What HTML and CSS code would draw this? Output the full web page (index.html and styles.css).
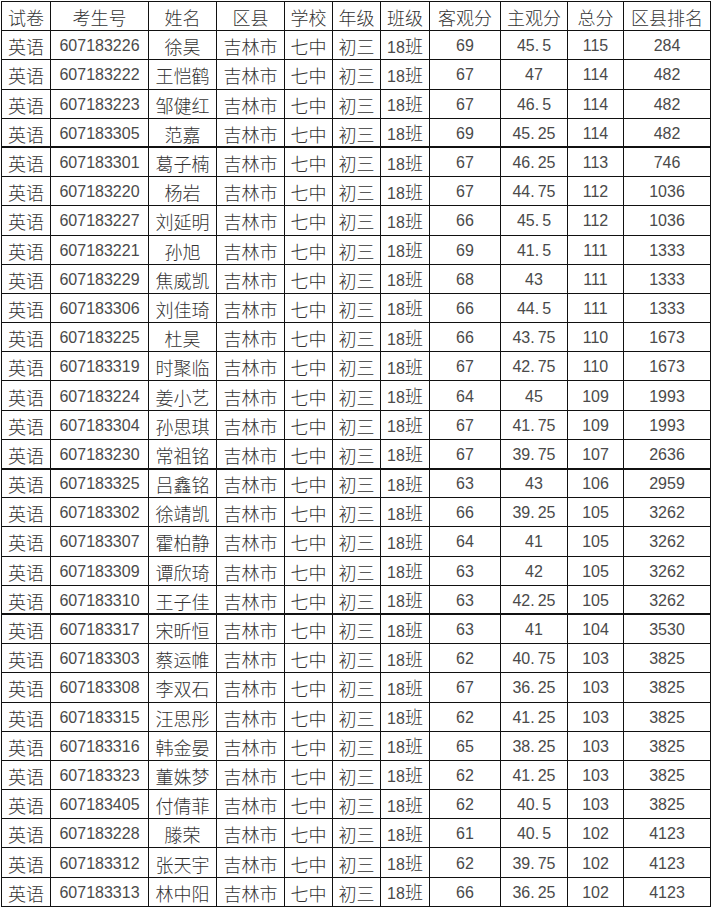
FILE: index.html
```html
<!DOCTYPE html>
<html lang="zh-CN">
<head>
<meta charset="utf-8">
<title>成绩表</title>
<link rel="stylesheet" href="styles.css">
</head>
<body>
<table class="grid">
<colgroup>
<col class="c1"><col class="c2"><col class="c3"><col class="c4"><col class="c5"><col class="c6"><col class="c7"><col class="c8"><col class="c9"><col class="c10"><col class="c11">
</colgroup>
<thead>
<tr><th>试卷</th><th>考生号</th><th>姓名</th><th>区县</th><th>学校</th><th>年级</th><th>班级</th><th>客观分</th><th>主观分</th><th>总分</th><th>区县排名</th></tr>
</thead>
<tbody>
<tr><td>英语</td><td class="n">607183226</td><td>徐昊</td><td>吉林市</td><td>七中</td><td>初三</td><td><span class="n">18</span>班</td><td class="n">69</td><td class="n">45<span class="dot">.</span>5</td><td class="n">115</td><td class="n">284</td></tr>
<tr><td>英语</td><td class="n">607183222</td><td>王恺鹤</td><td>吉林市</td><td>七中</td><td>初三</td><td><span class="n">18</span>班</td><td class="n">67</td><td class="n">47</td><td class="n">114</td><td class="n">482</td></tr>
<tr><td>英语</td><td class="n">607183223</td><td>邹健红</td><td>吉林市</td><td>七中</td><td>初三</td><td><span class="n">18</span>班</td><td class="n">67</td><td class="n">46<span class="dot">.</span>5</td><td class="n">114</td><td class="n">482</td></tr>
<tr class="thick"><td>英语</td><td class="n">607183305</td><td>范嘉</td><td>吉林市</td><td>七中</td><td>初三</td><td><span class="n">18</span>班</td><td class="n">69</td><td class="n">45<span class="dot">.</span>25</td><td class="n">114</td><td class="n">482</td></tr>
<tr><td>英语</td><td class="n">607183301</td><td>葛子楠</td><td>吉林市</td><td>七中</td><td>初三</td><td><span class="n">18</span>班</td><td class="n">67</td><td class="n">46<span class="dot">.</span>25</td><td class="n">113</td><td class="n">746</td></tr>
<tr><td>英语</td><td class="n">607183220</td><td>杨岩</td><td>吉林市</td><td>七中</td><td>初三</td><td><span class="n">18</span>班</td><td class="n">67</td><td class="n">44<span class="dot">.</span>75</td><td class="n">112</td><td class="n">1036</td></tr>
<tr><td>英语</td><td class="n">607183227</td><td>刘延明</td><td>吉林市</td><td>七中</td><td>初三</td><td><span class="n">18</span>班</td><td class="n">66</td><td class="n">45<span class="dot">.</span>5</td><td class="n">112</td><td class="n">1036</td></tr>
<tr><td>英语</td><td class="n">607183221</td><td>孙旭</td><td>吉林市</td><td>七中</td><td>初三</td><td><span class="n">18</span>班</td><td class="n">69</td><td class="n">41<span class="dot">.</span>5</td><td class="n">111</td><td class="n">1333</td></tr>
<tr><td>英语</td><td class="n">607183229</td><td>焦威凯</td><td>吉林市</td><td>七中</td><td>初三</td><td><span class="n">18</span>班</td><td class="n">68</td><td class="n">43</td><td class="n">111</td><td class="n">1333</td></tr>
<tr><td>英语</td><td class="n">607183306</td><td>刘佳琦</td><td>吉林市</td><td>七中</td><td>初三</td><td><span class="n">18</span>班</td><td class="n">66</td><td class="n">44<span class="dot">.</span>5</td><td class="n">111</td><td class="n">1333</td></tr>
<tr><td>英语</td><td class="n">607183225</td><td>杜昊</td><td>吉林市</td><td>七中</td><td>初三</td><td><span class="n">18</span>班</td><td class="n">66</td><td class="n">43<span class="dot">.</span>75</td><td class="n">110</td><td class="n">1673</td></tr>
<tr><td>英语</td><td class="n">607183319</td><td>时聚临</td><td>吉林市</td><td>七中</td><td>初三</td><td><span class="n">18</span>班</td><td class="n">67</td><td class="n">42<span class="dot">.</span>75</td><td class="n">110</td><td class="n">1673</td></tr>
<tr><td>英语</td><td class="n">607183224</td><td>姜小艺</td><td>吉林市</td><td>七中</td><td>初三</td><td><span class="n">18</span>班</td><td class="n">64</td><td class="n">45</td><td class="n">109</td><td class="n">1993</td></tr>
<tr><td>英语</td><td class="n">607183304</td><td>孙思琪</td><td>吉林市</td><td>七中</td><td>初三</td><td><span class="n">18</span>班</td><td class="n">67</td><td class="n">41<span class="dot">.</span>75</td><td class="n">109</td><td class="n">1993</td></tr>
<tr class="thick"><td>英语</td><td class="n">607183230</td><td>常祖铭</td><td>吉林市</td><td>七中</td><td>初三</td><td><span class="n">18</span>班</td><td class="n">67</td><td class="n">39<span class="dot">.</span>75</td><td class="n">107</td><td class="n">2636</td></tr>
<tr><td>英语</td><td class="n">607183325</td><td>吕鑫铭</td><td>吉林市</td><td>七中</td><td>初三</td><td><span class="n">18</span>班</td><td class="n">63</td><td class="n">43</td><td class="n">106</td><td class="n">2959</td></tr>
<tr><td>英语</td><td class="n">607183302</td><td>徐靖凯</td><td>吉林市</td><td>七中</td><td>初三</td><td><span class="n">18</span>班</td><td class="n">66</td><td class="n">39<span class="dot">.</span>25</td><td class="n">105</td><td class="n">3262</td></tr>
<tr><td>英语</td><td class="n">607183307</td><td>霍柏静</td><td>吉林市</td><td>七中</td><td>初三</td><td><span class="n">18</span>班</td><td class="n">64</td><td class="n">41</td><td class="n">105</td><td class="n">3262</td></tr>
<tr><td>英语</td><td class="n">607183309</td><td>谭欣琦</td><td>吉林市</td><td>七中</td><td>初三</td><td><span class="n">18</span>班</td><td class="n">63</td><td class="n">42</td><td class="n">105</td><td class="n">3262</td></tr>
<tr class="thick"><td>英语</td><td class="n">607183310</td><td>王子佳</td><td>吉林市</td><td>七中</td><td>初三</td><td><span class="n">18</span>班</td><td class="n">63</td><td class="n">42<span class="dot">.</span>25</td><td class="n">105</td><td class="n">3262</td></tr>
<tr><td>英语</td><td class="n">607183317</td><td>宋昕恒</td><td>吉林市</td><td>七中</td><td>初三</td><td><span class="n">18</span>班</td><td class="n">63</td><td class="n">41</td><td class="n">104</td><td class="n">3530</td></tr>
<tr><td>英语</td><td class="n">607183303</td><td>蔡运帷</td><td>吉林市</td><td>七中</td><td>初三</td><td><span class="n">18</span>班</td><td class="n">62</td><td class="n">40<span class="dot">.</span>75</td><td class="n">103</td><td class="n">3825</td></tr>
<tr><td>英语</td><td class="n">607183308</td><td>李双石</td><td>吉林市</td><td>七中</td><td>初三</td><td><span class="n">18</span>班</td><td class="n">67</td><td class="n">36<span class="dot">.</span>25</td><td class="n">103</td><td class="n">3825</td></tr>
<tr><td>英语</td><td class="n">607183315</td><td>汪思彤</td><td>吉林市</td><td>七中</td><td>初三</td><td><span class="n">18</span>班</td><td class="n">62</td><td class="n">41<span class="dot">.</span>25</td><td class="n">103</td><td class="n">3825</td></tr>
<tr><td>英语</td><td class="n">607183316</td><td>韩金晏</td><td>吉林市</td><td>七中</td><td>初三</td><td><span class="n">18</span>班</td><td class="n">65</td><td class="n">38<span class="dot">.</span>25</td><td class="n">103</td><td class="n">3825</td></tr>
<tr><td>英语</td><td class="n">607183323</td><td>董姝梦</td><td>吉林市</td><td>七中</td><td>初三</td><td><span class="n">18</span>班</td><td class="n">62</td><td class="n">41<span class="dot">.</span>25</td><td class="n">103</td><td class="n">3825</td></tr>
<tr><td>英语</td><td class="n">607183405</td><td>付倩菲</td><td>吉林市</td><td>七中</td><td>初三</td><td><span class="n">18</span>班</td><td class="n">62</td><td class="n">40<span class="dot">.</span>5</td><td class="n">103</td><td class="n">3825</td></tr>
<tr><td>英语</td><td class="n">607183228</td><td>滕荣</td><td>吉林市</td><td>七中</td><td>初三</td><td><span class="n">18</span>班</td><td class="n">61</td><td class="n">40<span class="dot">.</span>5</td><td class="n">102</td><td class="n">4123</td></tr>
<tr><td>英语</td><td class="n">607183312</td><td>张天宇</td><td>吉林市</td><td>七中</td><td>初三</td><td><span class="n">18</span>班</td><td class="n">62</td><td class="n">39<span class="dot">.</span>75</td><td class="n">102</td><td class="n">4123</td></tr>
<tr><td>英语</td><td class="n">607183313</td><td>林中阳</td><td>吉林市</td><td>七中</td><td>初三</td><td><span class="n">18</span>班</td><td class="n">66</td><td class="n">36<span class="dot">.</span>25</td><td class="n">102</td><td class="n">4123</td></tr>
</tbody>
</table>
</body>
</html>
```
FILE: styles.css
```css
html, body {
  margin: 0;
  padding: 0;
  background: #ffffff;
}

body {
  padding: 1px 0 0 1px;
  font-family: "Noto Sans CJK SC", "Liberation Sans", sans-serif;
  color: #333333;
}

.grid {
  border-collapse: collapse;
  table-layout: fixed;
  width: 710px;
  font-size: 18px;
  font-weight: 300;
}

.c1 { width: 49px; }
.c2 { width: 98px; }
.c3 { width: 68px; }
.c4 { width: 68px; }
.c5 { width: 48px; }
.c6 { width: 48px; }
.c7 { width: 49px; }
.c8 { width: 71px; }
.c9 { width: 67px; }
.c10 { width: 56px; }
.c11 { width: 87px; }

.grid tr {
  height: 29.2px;
}

.grid th,
.grid td {
  border: 1px solid #111111;
  padding: 2px 0 0 0;
  text-align: center;
  vertical-align: middle;
  font-weight: 300;
  line-height: 20px;
  white-space: nowrap;
  overflow: hidden;
}

.grid tr.thick td {
  border-bottom: 2px solid #111111;
}

.n {
  font-family: "Liberation Sans", "Noto Sans CJK SC", sans-serif;
  font-weight: 400;
  font-size: 16px;
  color: #4a4a4a;
}

.dot {
  margin-right: 3px;
}
```
